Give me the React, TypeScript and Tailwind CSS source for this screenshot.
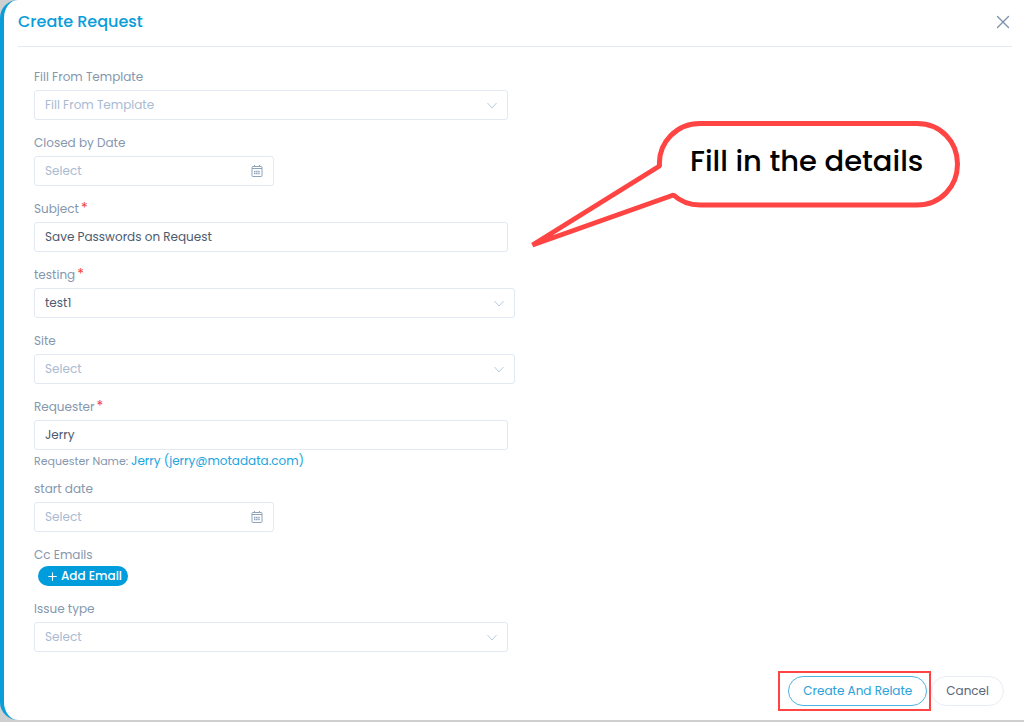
import React, { useState } from 'react';
import { X, Plus } from 'lucide-react';

const CONTROL =
  'block w-full h-[30px] rounded-[3px] border border-[#e3e9f2] bg-white px-2.5 text-xs leading-5 outline-none focus:border-[#099dd9] placeholder:text-[#a9bbd2]';

function ChevronIcon() {
  return (
    <svg
      className="pointer-events-none absolute right-2.5 top-2.5 size-3"
      viewBox="0 0 12 12"
      fill="none"
      stroke="#b9cbe0"
      aria-hidden="true"
    >
      <path d="M1.500 3 6 8l4.500-5" />
    </svg>
  );
}

function CalendarIcon() {
  return (
    <svg
      className="pointer-events-none absolute right-2.5 top-2 size-3.5"
      viewBox="0 0 14 14"
      fill="none"
      stroke="#8fa3bb"
      aria-hidden="true"
    >
      <rect x="2" y="2.500" width="10" height="10" rx="1" />
      <path d="M2 4.500h10M4.500 1v2M9.500 1v2" />
      <path d="M4 7.500h6M4 9.500h6" strokeWidth="1.400" strokeDasharray="1.500 0.600" />
    </svg>
  );
}

interface LabelProps {
  id: string;
  text: string;
  required?: boolean;
}

function FieldLabel({ id, text, required }: LabelProps) {
  return (
    <label htmlFor={id} className="mb-0.5 block text-xs leading-[22px] text-[#8597ae]">
      {text}
      {required && <span className="ml-0.5 align-top text-sm leading-5 text-[#f04438]">*</span>}
    </label>
  );
}

interface SelectFieldProps extends LabelProps {
  placeholder?: string;
  options?: string[];
  initial?: string;
  wide?: boolean;
}

function SelectField({ id, text, required, placeholder, options = [], initial = '', wide }: SelectFieldProps) {
  const [value, setValue] = useState(initial);
  return (
    <div className={wide ? '-mr-[7px]' : ''}>
      <FieldLabel id={id} text={text} required={required} />
      <div className="relative">
        <select
          id={id}
          value={value}
          onChange={e => setValue(e.target.value)}
          className={`${CONTROL} appearance-none ${value ? 'text-[#4b5a6e]' : 'text-[#a9bbd2]'}`}
        >
          {placeholder && <option value="">{placeholder}</option>}
          {options.map(o => (
            <option key={o} value={o}>{o}</option>
          ))}
        </select>
        <ChevronIcon />
      </div>
    </div>
  );
}

function DateField({ id, text }: LabelProps) {
  return (
    <div>
      <FieldLabel id={id} text={text} />
      <div className="relative w-60">
        <input id={id} type="text" placeholder="Select" className={`${CONTROL} text-[#4b5a6e]`} />
        <CalendarIcon />
      </div>
    </div>
  );
}

function TextField({ id, text, required, initial }: LabelProps & { initial: string }) {
  return (
    <div>
      <FieldLabel id={id} text={text} required={required} />
      <input id={id} type="text" defaultValue={initial} className={`${CONTROL} text-[#4b5a6e]`} />
    </div>
  );
}

function Callout() {
  return (
    <div className="relative mt-[54px] w-[430px]">
      <svg className="block w-full" viewBox="0 0 430 128" fill="none" stroke="#ff4444" strokeWidth="5" aria-hidden="true">
        <path d="M129.500 46C128 22 147 3.500 170 3.500H387C411 3.500 427.500 22 427.500 44S411 85 387 85H170C160 85 150 81 143.500 75L2.500 125Z" strokeLinejoin="bevel" />
      </svg>
      <p className="absolute left-40 top-[21px] text-[29px] leading-10 font-medium whitespace-nowrap text-black">
        Fill in the details
      </p>
    </div>
  );
}

export default function App() {
  return (
    <div className="min-h-screen bg-[#cfcfcf] pb-0.5 font-['Poppins','Inter',sans-serif]">
      <div className="flex min-h-[calc(100vh-2px)] flex-col rounded-l-[18px] border-l-4 border-[#099dd9] bg-white pl-3.5 pr-3">
        <header className="flex h-[47px] items-center justify-between border-b border-[#e3e9f2] pb-0.5">
          <h1 className="text-base font-medium text-[#099dd9]">Create Request</h1>
          <button type="button" aria-label="Close" className="-mr-0.5 text-[#7b8fa8]">
            <X size={22} strokeWidth={1.4} />
          </button>
        </header>

        <main className="grid grid-cols-2 gap-[22px] pl-4 pr-2 pt-[19px]">
          <form id="request" className="flex flex-col gap-3" onSubmit={e => e.preventDefault()}>
            <SelectField id="template" text="Fill From Template" placeholder="Fill From Template" />
            <DateField id="closed-by" text="Closed by Date" />
            <TextField id="subject" text="Subject" required initial="Save Passwords on Request" />
            <SelectField id="testing" text="testing" required options={['test1']} initial="test1" wide />
            <SelectField id="site" text="Site" placeholder="Select" wide />
            <div className="-mb-1.5">
              <TextField id="requester" text="Requester" required initial="Jerry" />
              <p className="text-[11px] leading-[22px] text-[#8597ae]">
                Requester Name:{' '}
                <a href="mailto:jerry@motadata.com" className="text-xs text-[#20a5df]">
                  Jerry (jerry@motadata.com)
                </a>
              </p>
            </div>
            <DateField id="start-date" text="start date" />
            <div>
              <p className="text-xs leading-[22px] text-[#8597ae]">Cc Emails</p>
              <button
                type="button"
                className="ml-1 flex h-5 items-center gap-0.5 rounded-full bg-[#009ddc] pl-2 pr-1.5 text-xs font-medium text-white"
              >
                <Plus size={13} strokeWidth={2} />
                Add Email
              </button>
            </div>
            <SelectField id="issue-type" text="Issue type" placeholder="Select" />
          </form>

          <Callout />
        </main>

        <footer className="mt-auto flex items-center justify-end pb-[9px] pr-2">
          <div className="border-2 border-[#ff4444] py-[3px] pl-2 pr-0.5">
            <button
              type="submit"
              form="request"
              className="block h-[30px] rounded-full border border-[#4bb5e3] px-3.5 text-xs text-[#2ba0d9]"
            >
              Create And Relate
            </button>
          </div>
          <button
            type="button"
            className="h-[30px] rounded-full border border-[#e8edf4] px-3.5 text-xs text-[#5b6675]"
          >
            Cancel
          </button>
        </footer>
      </div>
    </div>
  );
}
